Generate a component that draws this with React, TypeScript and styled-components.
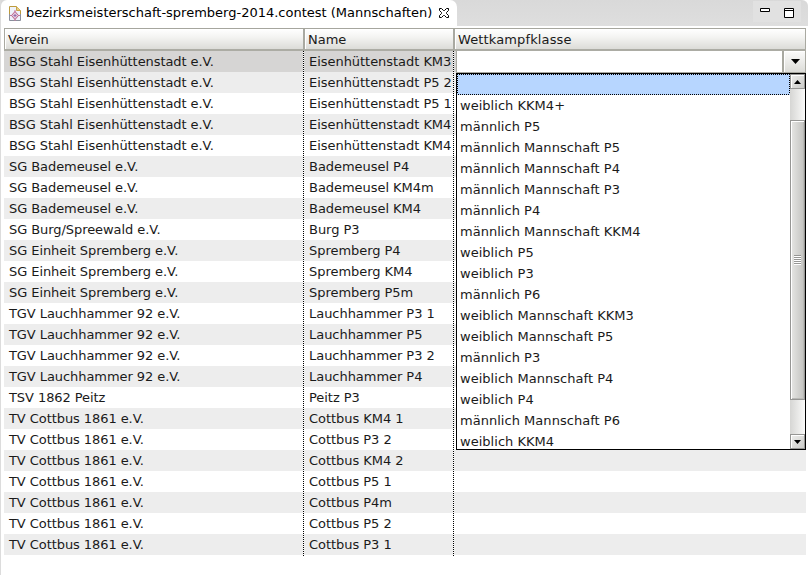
import React from "react";
import styled, { createGlobalStyle, css } from "styled-components";

const GlobalStyle = createGlobalStyle`
  * { box-sizing: border-box; }
  html, body { margin: 0; padding: 0; background: #fff; overflow: hidden; }
  body { font: 13px/21px "DejaVu Sans", sans-serif; color: #1a1a1a; }
`;

const Window = styled.div`
  width: 808px;
  height: 575px;
  border-left: 1px solid #dcdcdc;
  background: #fff;
`;

const TabBar = styled.div`
  height: 26px;
  display: flex;
  justify-content: space-between;
  background: linear-gradient(#d9d9d9, #dedede);
  border-top-right-radius: 6px;
`;

const Tab = styled.div`
  width: 456px;
  height: 26px;
  display: flex;
  align-items: center;
  padding-left: 8px;
  background: #fff;
  border-radius: 6px 7px 0 0;
  color: #000;
`;

const TabTitle = styled.span`
  width: 406px;
  margin: 0 7px 0 5px;
  line-height: 26px;
  white-space: nowrap;
`;

const WindowControls = styled.div`
  display: flex;
  gap: 14px;
  width: 48px;
  height: 21px;
  margin: 1px 7px 0 0;
  padding: 7px 0 0 7px;
  background: #e1e1e1;
`;

const Table = styled.div`
  width: 802px;
  margin: 2px 0 0 3px;
`;

const columns = css`
  display: grid;
  grid-template-columns: 300px 150px 352px;
`;

const HeaderRow = styled.div`
  ${columns}
  height: 23px;
  border-top: 1px solid #a6a69e;
  border-bottom: 2px solid #acaca4;
  background: linear-gradient(#fff, #f4f4f2 40%, #dcdcd8);
`;

const HeaderCell = styled.div<{ $tracking?: number }>`
  height: 20px;
  padding-left: 3px;
  line-height: 21px;
  letter-spacing: ${(p) => p.$tracking ?? 0}px;
  border-left: 1px solid #a9a9a1;
  border-right: 1px solid #a9a9a1;
  box-shadow: inset 1px 1px #fff;
`;

const Body = styled.div`
  position: relative;
`;

const Row = styled.div<{ $selected: boolean }>`
  ${columns}
  height: 21px;
  background: ${(p) => (p.$selected ? "#d6d5d4" : "#fff")};
  &:nth-child(even) { background: #ededed; }
`;

const Cell = styled.div<{ $tracking?: number }>`
  padding-left: 5px;
  overflow: hidden;
  white-space: nowrap;
  letter-spacing: ${(p) => p.$tracking ?? 0}px;
`;

const GridLine = styled.i<{ $x: number }>`
  position: absolute;
  left: ${(p) => p.$x}px;
  top: 0;
  bottom: -1px;
  width: 1px;
  background: repeating-linear-gradient(#000 0 1px, #fff 1px 2px);
`;

const Combo = styled.div`
  position: absolute;
  left: 452px;
  top: 0;
  width: 350px;
`;

const ComboField = styled.div`
  display: flex;
  height: 22px;
  border: 1px solid #a8a8a0;
  border-top: 0;
  background: #fff;
`;

const ComboInput = styled.div`
  flex: 1;
`;

const ComboButton = styled.div`
  width: 23px;
  padding: 8px 0 0 7px;
  line-height: 0;
  border-left: 2px solid #a8a8a0;
  box-shadow: inset 1px 1px #fff;
  background: linear-gradient(#fbfbfa, #dcdcd8);
`;

const Popup = styled.div`
  display: flex;
  height: 377px;
  border: 1px solid #000;
  background: #fff;
`;

const Options = styled.div`
  flex: 1;
  overflow: hidden;
  letter-spacing: 0.03px;
`;

const Option = styled.div<{ $active: boolean }>`
  height: 21px;
  padding-left: 3px;
  white-space: nowrap;
  ${(p) =>
    p.$active &&
    css`
      padding: 1px;
      background:
        repeating-linear-gradient(90deg, #000 0 1px, #b7d6ff 1px 2px) 0 0 / 100% 1px no-repeat,
        repeating-linear-gradient(90deg, #b7d6ff 0 1px, #000 1px 2px) 0 100% / 100% 1px no-repeat,
        repeating-linear-gradient(#000 0 1px, #b7d6ff 1px 2px) 0 0 / 1px 100% no-repeat,
        repeating-linear-gradient(#000 0 1px, #b7d6ff 1px 2px) 100% 0 / 1px 100% no-repeat,
        #b7d6ff;
    `}
`;

const ScrollBar = styled.div`
  width: 15px;
  display: flex;
  flex-direction: column;
  justify-content: space-between;
  background: linear-gradient(90deg, #d6d6d4, #fafaf9);
`;

const ScrollButton = styled.div`
  height: 15px;
  padding: 5px 0 0 3px;
  line-height: 0;
  border: 1px solid #969694;
  box-shadow: inset 1px 1px #fff;
  background: linear-gradient(135deg, #efefed, #cbcbc8);
`;

const Thumb = styled.div`
  height: 280px;
  margin: 31px 0 34px;
  display: flex;
  align-items: center;
  justify-content: center;
  border: 1px solid #969694;
  box-shadow: inset 1px 1px #fff, inset -1px -1px #b9b9b6;
  background: linear-gradient(90deg, #e6e6e4, #c3c3c0);
`;

const Grip = styled.div`
  width: 7px;
  height: 10px;
  margin-right: 1px;
  background: repeating-linear-gradient(#969694 0 1px, #fff 1px 2px);
`;

const rows: [string, string][] = [
  ["BSG Stahl Eisenhüttenstadt e.V.", "Eisenhüttenstadt KM3"],
  ["BSG Stahl Eisenhüttenstadt e.V.", "Eisenhüttenstadt P5 2"],
  ["BSG Stahl Eisenhüttenstadt e.V.", "Eisenhüttenstadt P5 1"],
  ["BSG Stahl Eisenhüttenstadt e.V.", "Eisenhüttenstadt KM4"],
  ["BSG Stahl Eisenhüttenstadt e.V.", "Eisenhüttenstadt KM4"],
  ["SG Bademeusel e.V.", "Bademeusel P4"],
  ["SG Bademeusel e.V.", "Bademeusel KM4m"],
  ["SG Bademeusel e.V.", "Bademeusel KM4"],
  ["SG Burg/Spreewald e.V.", "Burg P3"],
  ["SG Einheit Spremberg e.V.", "Spremberg P4"],
  ["SG Einheit Spremberg e.V.", "Spremberg KM4"],
  ["SG Einheit Spremberg e.V.", "Spremberg P5m"],
  ["TGV Lauchhammer 92 e.V.", "Lauchhammer P3 1"],
  ["TGV Lauchhammer 92 e.V.", "Lauchhammer P5"],
  ["TGV Lauchhammer 92 e.V.", "Lauchhammer P3 2"],
  ["TGV Lauchhammer 92 e.V.", "Lauchhammer P4"],
  ["TSV 1862 Peitz", "Peitz P3"],
  ["TV Cottbus 1861 e.V.", "Cottbus KM4 1"],
  ["TV Cottbus 1861 e.V.", "Cottbus P3 2"],
  ["TV Cottbus 1861 e.V.", "Cottbus KM4 2"],
  ["TV Cottbus 1861 e.V.", "Cottbus P5 1"],
  ["TV Cottbus 1861 e.V.", "Cottbus P4m"],
  ["TV Cottbus 1861 e.V.", "Cottbus P5 2"],
  ["TV Cottbus 1861 e.V.", "Cottbus P3 1"],
];

const options = [
  "",
  "weiblich KKM4+",
  "männlich P5",
  "männlich Mannschaft P5",
  "männlich Mannschaft P4",
  "männlich Mannschaft P3",
  "männlich P4",
  "männlich Mannschaft KKM4",
  "weiblich P5",
  "weiblich P3",
  "männlich P6",
  "weiblich Mannschaft KKM3",
  "weiblich Mannschaft P5",
  "männlich P3",
  "weiblich Mannschaft P4",
  "weiblich P4",
  "männlich Mannschaft P6",
  "weiblich KKM4",
];

const DocumentIcon = () => (
  <svg width="12" height="15" viewBox="0 0 12 15" fill="none">
    <path d="M.5 14.5V.5h7l4 4v10z" fill="#eef3fb" />
    <path d="M.5 8V.5h7l4 4V8" stroke="#bd9a3c" />
    <path d="M.5 8v6.500h11V8" stroke="#8a8f9c" />
    <path d="M7.500.5v4h4" fill="#e9cf86" stroke="#c9a64a" />
    <path d="M6 4v11M1 9.500h10" stroke="#c77c9c" />
    <path d="M6 5.500 9.500 9.500 6 13.500 2.500 9.500z" fill="#e6c9dc" stroke="#b8628a" />
    <path d="M6 8v3M4.500 9.500h3" stroke="#8f6fae" />
  </svg>
);

const CloseIcon = () => (
  <svg width="10" height="10" viewBox="-.5 -.5 10 10" fill="#fff" stroke="#000">
    <path d="M0 0H2L4 2H5L7 0H9V2L7 4V5L9 7V9H7L5 7H4L2 9H0V7L2 5V4L0 2z" />
  </svg>
);

const Arrow = ({ w, h, up }: { w: number; h: number; up?: boolean }) => (
  <svg width={w} height={h} viewBox={`0 0 ${w} ${h}`}>
    <path d={up ? `M0 ${h}L${w / 2} 0 ${w} ${h}z` : `M0 0h${w}L${w / 2} ${h}z`} fill="#000" />
  </svg>
);

export default function App() {
  return (
    <>
      <GlobalStyle />
      <Window>
        <TabBar>
          <Tab>
            <DocumentIcon />
            <TabTitle>bezirksmeisterschaft-spremberg-2014.contest (Mannschaften)</TabTitle>
            <CloseIcon />
          </Tab>
          <WindowControls>
            <svg width="10" height="4" viewBox="0 0 10 4">
              <path d="M.5.5h9v3h-9z" fill="#fff" stroke="#000" />
            </svg>
            <svg width="10" height="10" viewBox="0 0 10 10">
              <path d="M.5.5h9v9h-9zM1 2.500h8" fill="#fff" stroke="#000" />
            </svg>
          </WindowControls>
        </TabBar>
        <Table>
          <HeaderRow>
            <HeaderCell>Verein</HeaderCell>
            <HeaderCell>Name</HeaderCell>
            <HeaderCell $tracking={0.13}>Wettkampfklasse</HeaderCell>
          </HeaderRow>
          <Body>
            {rows.map(([club, team], i) => (
              <Row key={i} $selected={i === 0}>
                <Cell $tracking={-0.07}>{club}</Cell>
                <Cell $tracking={-0.04}>{team}</Cell>
                <Cell />
              </Row>
            ))}
            <GridLine $x={299} />
            <GridLine $x={449} />
            <Combo>
              <ComboField>
                <ComboInput />
                <ComboButton>
                  <Arrow w={9} h={5} />
                </ComboButton>
              </ComboField>
              <Popup>
                <Options>
                  {options.map((label, i) => (
                    <Option key={i} $active={i === 0}>
                      {label}
                    </Option>
                  ))}
                </Options>
                <ScrollBar>
                  <ScrollButton>
                    <Arrow w={7} h={4} up />
                  </ScrollButton>
                  <Thumb>
                    <Grip />
                  </Thumb>
                  <ScrollButton>
                    <Arrow w={7} h={4} />
                  </ScrollButton>
                </ScrollBar>
              </Popup>
            </Combo>
          </Body>
        </Table>
      </Window>
    </>
  );
}
